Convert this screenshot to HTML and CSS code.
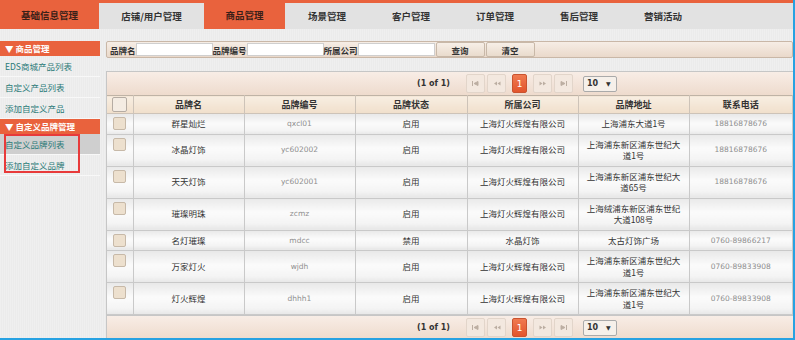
FILE: index.html
```html
<!DOCTYPE html>
<html lang="zh-CN">

<head>
  <meta charset="UTF-8" />
  <title>自定义品牌列表</title>
  <link rel="stylesheet" href="styles.css">
</head>

<body>
  <div class="frame">
    <!-- Top navigation -->
    <div class="nav">
      <div class="tab orange w99">基础信息管理</div>
      <div class="tab grey w105">店铺/用户管理</div>
      <div class="tab orange w81">商品管理</div>
      <div class="tab grey">场景管理</div>
      <div class="tab grey">客户管理</div>
      <div class="tab grey">订单管理</div>
      <div class="tab grey">售后管理</div>
      <div class="tab grey">营销活动</div>
      <div class="tab grey fill"></div>
    </div>

    <div class="page">
      <!-- Left menu -->
      <div class="side">
        <div class="side-head">▼ 商品管理</div>
        <div class="side-item">EDS商城产品列表</div>
        <div class="side-item">自定义产品列表</div>
        <div class="side-item">添加自定义产品</div>
        <div class="side-head">▼ 自定义品牌管理</div>
        <div class="side-item active">自定义品牌列表</div>
        <div class="side-item">添加自定义品牌</div>
        <div class="mark"></div>
      </div>

      <!-- Main content -->
      <div class="content">
        <div class="search">
          <label>品牌名</label><input type="text" class="field" />
          <label>品牌编号</label><input type="text" class="field" />
          <label>所属公司</label><input type="text" class="field" />
          <button class="sbtn">查询</button>
          <button class="sbtn">清空</button>
        </div>

        <div class="panel">
          <div class="pager">
            <span class="count">(1 of 1)</span>
            <span class="pbtn"><svg width="7" height="5" viewBox="0 0 7 5"><path d="M0.5 0v5M6 0.5L2 2.5L6 4.5z" stroke="#bcaea2" fill="#bcaea2" stroke-width="1"/></svg></span>
            <span class="pbtn"><svg width="8" height="5" viewBox="0 0 8 5"><path d="M4 0.5L1 2.5L4 4.5zM7.5 0.5L4.5 2.5L7.5 4.5z" fill="#bcaea2"/></svg></span>
            <span class="pbtn cur">1</span>
            <span class="pbtn"><svg width="8" height="5" viewBox="0 0 8 5"><path d="M0.5 0.5L3.5 2.5L0.5 4.5zM4 0.5L7 2.5L4 4.5z" fill="#bcaea2"/></svg></span>
            <span class="pbtn"><svg width="7" height="5" viewBox="0 0 7 5"><path d="M6.5 0v5M1 0.5L5 2.5L1 4.5z" stroke="#bcaea2" fill="#bcaea2" stroke-width="1"/></svg></span>
            <span class="rows">10 <i>▼</i></span>
          </div>

          <table class="grid">
            <colgroup>
              <col style="width:26px">
              <col style="width:111px">
              <col style="width:111px">
              <col style="width:112px">
              <col style="width:111px">
              <col style="width:111px">
              <col>
            </colgroup>
            <thead>
              <tr>
                <th><span class="chk big"></span></th>
                <th>品牌名</th>
                <th>品牌编号</th>
                <th>品牌状态</th>
                <th>所属公司</th>
                <th>品牌地址</th>
                <th>联系电话</th>
              </tr>
            </thead>
            <tbody>
              <tr>
                <td class="c"><span class="chk"></span></td>
                <td>群星灿烂</td>
                <td class="code">qxcl01</td>
                <td>启用</td>
                <td>上海灯火辉煌有限公司</td>
                <td>上海浦东大道1号</td>
                <td class="code">18816878676</td>
              </tr>
              <tr>
                <td class="c"><span class="chk"></span></td>
                <td>冰晶灯饰</td>
                <td class="code">yc602002</td>
                <td>启用</td>
                <td>上海灯火辉煌有限公司</td>
                <td>上海浦东新区浦东世纪大道1号</td>
                <td class="code">18816878676</td>
              </tr>
              <tr>
                <td class="c"><span class="chk"></span></td>
                <td>天天灯饰</td>
                <td class="code">yc602001</td>
                <td>启用</td>
                <td>上海灯火辉煌有限公司</td>
                <td>上海浦东新区浦东世纪大道65号</td>
                <td class="code">18816878676</td>
              </tr>
              <tr>
                <td class="c"><span class="chk"></span></td>
                <td>璀璨明珠</td>
                <td class="code">zcmz</td>
                <td>启用</td>
                <td>上海灯火辉煌有限公司</td>
                <td>上海绒浦东新区浦东世纪大道108号</td>
                <td class="code"></td>
              </tr>
              <tr>
                <td class="c"><span class="chk"></span></td>
                <td>名灯璀璨</td>
                <td class="code">mdcc</td>
                <td>禁用</td>
                <td>水晶灯饰</td>
                <td>太古灯饰广场</td>
                <td class="code">0760-89866217</td>
              </tr>
              <tr>
                <td class="c"><span class="chk"></span></td>
                <td>万家灯火</td>
                <td class="code">wjdh</td>
                <td>启用</td>
                <td>上海灯火辉煌有限公司</td>
                <td>上海浦东新区浦东世纪大道1号</td>
                <td class="code">0760-89833908</td>
              </tr>
              <tr>
                <td class="c"><span class="chk"></span></td>
                <td>灯火辉煌</td>
                <td class="code">dhhh1</td>
                <td>启用</td>
                <td>上海灯火辉煌有限公司</td>
                <td>上海浦东新区浦东世纪大道1号</td>
                <td class="code">0760-89833908</td>
              </tr>
            </tbody>
          </table>

          <div class="pager bottom">
            <span class="count">(1 of 1)</span>
            <span class="pbtn"><svg width="7" height="5" viewBox="0 0 7 5"><path d="M0.5 0v5M6 0.5L2 2.5L6 4.5z" stroke="#bcaea2" fill="#bcaea2" stroke-width="1"/></svg></span>
            <span class="pbtn"><svg width="8" height="5" viewBox="0 0 8 5"><path d="M4 0.5L1 2.5L4 4.5zM7.5 0.5L4.5 2.5L7.5 4.5z" fill="#bcaea2"/></svg></span>
            <span class="pbtn cur">1</span>
            <span class="pbtn"><svg width="8" height="5" viewBox="0 0 8 5"><path d="M0.5 0.5L3.5 2.5L0.5 4.5zM4 0.5L7 2.5L4 4.5z" fill="#bcaea2"/></svg></span>
            <span class="pbtn"><svg width="7" height="5" viewBox="0 0 7 5"><path d="M6.5 0v5M1 0.5L5 2.5L1 4.5z" stroke="#bcaea2" fill="#bcaea2" stroke-width="1"/></svg></span>
            <span class="rows">10 <i>▼</i></span>
          </div>
        </div>
      </div>
    </div>
  </div>
</body>

</html>
```

FILE: styles.css
```css
body {
  margin: 0;
  padding: 0;
  font-family: "Noto Sans CJK SC", "DejaVu Sans", sans-serif;
  font-size: 8.5px;
  color: #333;
}

.frame {
  width: 795px;
  height: 340px;
  box-sizing: border-box;
  border-right: 2px solid #27a2e2;
  border-bottom: 2px solid #27a2e2;
  background: repeating-linear-gradient(90deg, #efefef 0 1px, #ebebeb 1px 2px);
  overflow: hidden;
}

/* top navigation */
.nav {
  display: flex;
  height: 29px;
  background: #e9623d;
}

.tab {
  width: 84px;
  display: flex;
  align-items: center;
  justify-content: center;
  font-size: 9.5px;
  font-weight: bold;
  flex-shrink: 0;
}

.tab.orange {
  color: #3a2018;
}

.tab.grey {
  background: #e2e2e2;
  margin-top: 3px;
  color: #333;
}

.tab.fill {
  flex: 1;
  width: auto;
}

.w99 { width: 99px; }
.w105 { width: 105px; }
.w81 { width: 81px; }

.page {
  display: flex;
  gap: 6px;
  padding-top: 12px;
}

/* left menu */
.side {
  width: 100px;
  flex-shrink: 0;
  position: relative;
}

.side-head {
  height: 15px;
  line-height: 15px;
  padding-left: 5px;
  background: #e9623d;
  color: #fff;
  font-weight: bold;
}

.side-item {
  height: 20px;
  line-height: 20px;
  padding-left: 5px;
  color: #2a7a78;
  border-bottom: 1px solid #f8f8f8;
}

.side-item.active {
  background: #cfcfcf;
}

.mark {
  position: absolute;
  left: 4px;
  top: 93px;
  width: 72px;
  height: 35px;
  border: 2px solid #e83a3a;
}

/* main */
.content {
  flex: 1;
}

.search {
  display: flex;
  align-items: center;
  height: 15px;
  padding: 0 3px;
  border: 1px solid #c9b7a7;
  border-radius: 2px;
  background: linear-gradient(#f6ede5, #ead9cb);
}

.search label {
  font-weight: bold;
}

.field {
  width: 77px;
  height: 13px;
  box-sizing: border-box;
  border: 1px solid #cfcfcf;
  margin: 0;
  padding: 0;
  background: #fff;
}

.sbtn {
  width: 49px;
  height: 15px;
  margin: 0 0 0 1px;
  padding: 0;
  border: 1px solid #c8b8a8;
  border-radius: 2px;
  background: linear-gradient(#f7efe7, #e9dbcd);
  font-family: inherit;
  font-size: 8.5px;
  font-weight: bold;
  color: #333;
}

.panel {
  margin-top: 13px;
  border: 1px solid #c6c6c6;
  border-right: none;
}

.pager {
  display: flex;
  align-items: center;
  height: 23px;
  padding-left: 310px;
  background: linear-gradient(#f8ede6, #eedbcd);
}

.pager.bottom {
  border-top: 1px solid #c6c6c6;
}

.count {
  font-family: "DejaVu Sans", sans-serif;
  font-weight: bold;
  font-size: 8px;
  margin-right: 16px;
}

.pbtn {
  width: 17px;
  height: 17px;
  margin-right: 2px;
  border: 1px solid #e2d5ca;
  border-radius: 2px;
  background: #f3e8df;
  display: flex;
  align-items: center;
  justify-content: center;
}

.pbtn.cur {
  width: 13px;
  margin: 0 6px 0 4px;
  background: linear-gradient(#f07a50, #e2552c);
  border-color: #c9532f;
  color: #fff;
  font-size: 9px;
  font-family: "DejaVu Sans", sans-serif;
}

.rows {
  margin-left: 8px;
  width: 29px;
  height: 14px;
  line-height: 14px;
  border: 1px solid #aaa;
  border-radius: 2px;
  background: #f6f0ea;
  font-family: "DejaVu Sans", sans-serif;
  font-weight: bold;
  font-size: 8px;
  padding-left: 3px;
  box-sizing: content-box;
}

.rows i {
  font-style: normal;
  font-size: 6px;
  margin-left: 5px;
}

/* table */
.grid {
  width: 100%;
  border-collapse: collapse;
  table-layout: fixed;
}

.grid th {
  height: 17px;
  padding: 0;
  font-size: 9px;
  font-weight: bold;
  background: linear-gradient(#f8eee2, #f0dfcb);
  border: 1px solid #cdc3b8;
  border-top-color: #bfb3a6;
}

.grid td {
  padding: 4px 5px;
  line-height: 11.5px;
  text-align: center;
  vertical-align: middle;
  border: 1px solid #c9c9c9;
  background: linear-gradient(#e9e9e9, #fbfbfb 45%, #f4f4f4 80%, #e7e7e7);
}

.grid tr > :first-child {
  border-left: none;
}

.grid td.c {
  vertical-align: top;
  padding: 3px 0 0;
}

.grid td.code {
  font-family: "DejaVu Sans", sans-serif;
  font-size: 7.5px;
  color: #8e8e8e;
}

.chk {
  display: inline-block;
  width: 11px;
  height: 11px;
  border: 1px solid #c7b9a8;
  border-radius: 2px;
  background: #ede0ce;
  vertical-align: top;
}

.chk.big {
  width: 13px;
  height: 13px;
  border-color: #b5aca3;
  background: #f4ece3;
  vertical-align: middle;
}
```
